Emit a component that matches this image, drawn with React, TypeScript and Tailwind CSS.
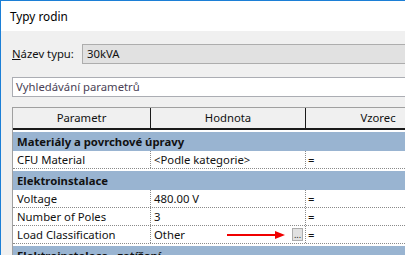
import React from 'react';

const font = { fontFamily: '"Noto Sans", "Open Sans", sans-serif' };

const GroupRow = ({ label }: { label: string }) => (
	<div className="h-[21px] border-t-2 border-white bg-[#99b4d1] pl-[4px] text-[11.3px] font-bold leading-[19px] text-[#111]">
		{label}
	</div>
);

const DataRow = ({ name, value, extra }: { name: string; value: string; extra?: React.ReactNode }) => (
	<div className="grid h-[18px] grid-cols-[137px_155px_1fr] border-b border-dotted border-[#8a8a8a] bg-white text-[11.3px] leading-[17px] text-[#111]">
		<div className="pl-[4px]">{name}</div>
		<div className="flex items-center border-l border-dotted border-[#8a8a8a] pl-[3px]">
			<span>{value}</span>
			{extra}
		</div>
		<div className="border-l border-dotted border-[#8a8a8a] pl-[2px]">=</div>
	</div>
);

const Arrow = () => (
	<div className="ml-auto mr-[2px] flex items-center gap-[7px]">
		<svg width="58" height="10" viewBox="0 0 58 10">
			<rect x="0" y="4" width="50" height="2" fill="#f00000" />
			<polygon points="48,1 58,5 48,9" fill="#f00000" />
		</svg>
		<div className="flex h-[13px] w-[11px] items-center justify-center border border-[#adadad] bg-[#e1e1e1] text-[9px] leading-none text-[#222]">
			...
		</div>
	</div>
);

export default function App() {
	return (
		<div className="h-[255px] w-[405px] overflow-hidden bg-[#f0f0f0]" style={font}>
			<div className="h-full border-l border-t border-[#1c7fd6]">
				<div className="h-[30px] bg-white pl-[9px] text-[11.8px] leading-[30px] text-black">Typy rodin</div>
				<div className="w-[520px] pl-[11px] pt-[13px]">
					<div className="flex h-[20px] items-center">
						<span className="w-[70px] text-[11.3px] text-[#111]">
							<span className="underline">N</span>ázev typu:
						</span>
						<div className="h-[20px] flex-1 border border-[#adadad] bg-[#e1e1e1] pl-[4px] text-[11.3px] leading-[18px] text-[#111]">
							30kVA
						</div>
					</div>
					<div className="mt-[13px] h-[20px] border border-[#abadb3] bg-white pl-[3px] text-[11.3px] leading-[18px] text-[#4a3f55]">
						Vyhledávání parametrů
					</div>
					<div className="mt-[10px] border-l border-t border-[#a0a0a0] bg-white">
						<div className="grid h-[22px] grid-cols-[137px_155px_1fr] border-b-2 border-[#1a1a1a] bg-[#f0f0f0] text-[11.3px] leading-[20px] text-[#111]">
							<div className="text-center">Parametr</div>
							<div className="border-l border-[#1a1a1a] text-center">Hodnota</div>
							<div className="w-[145px] border-l border-[#1a1a1a] text-center">Vzorec</div>
						</div>
						<GroupRow label="Materiály a povrchové úpravy" />
						<DataRow name="CFU Material" value="<Podle kategorie>" />
						<GroupRow label="Elektroinstalace" />
						<DataRow name="Voltage" value="480.00 V" />
						<DataRow name="Number of Poles" value="3" />
						<DataRow name="Load Classification" value="Other" extra={<Arrow />} />
						<GroupRow label="Elektroinstalace - zatížení" />
					</div>
				</div>
			</div>
		</div>
	);
}
